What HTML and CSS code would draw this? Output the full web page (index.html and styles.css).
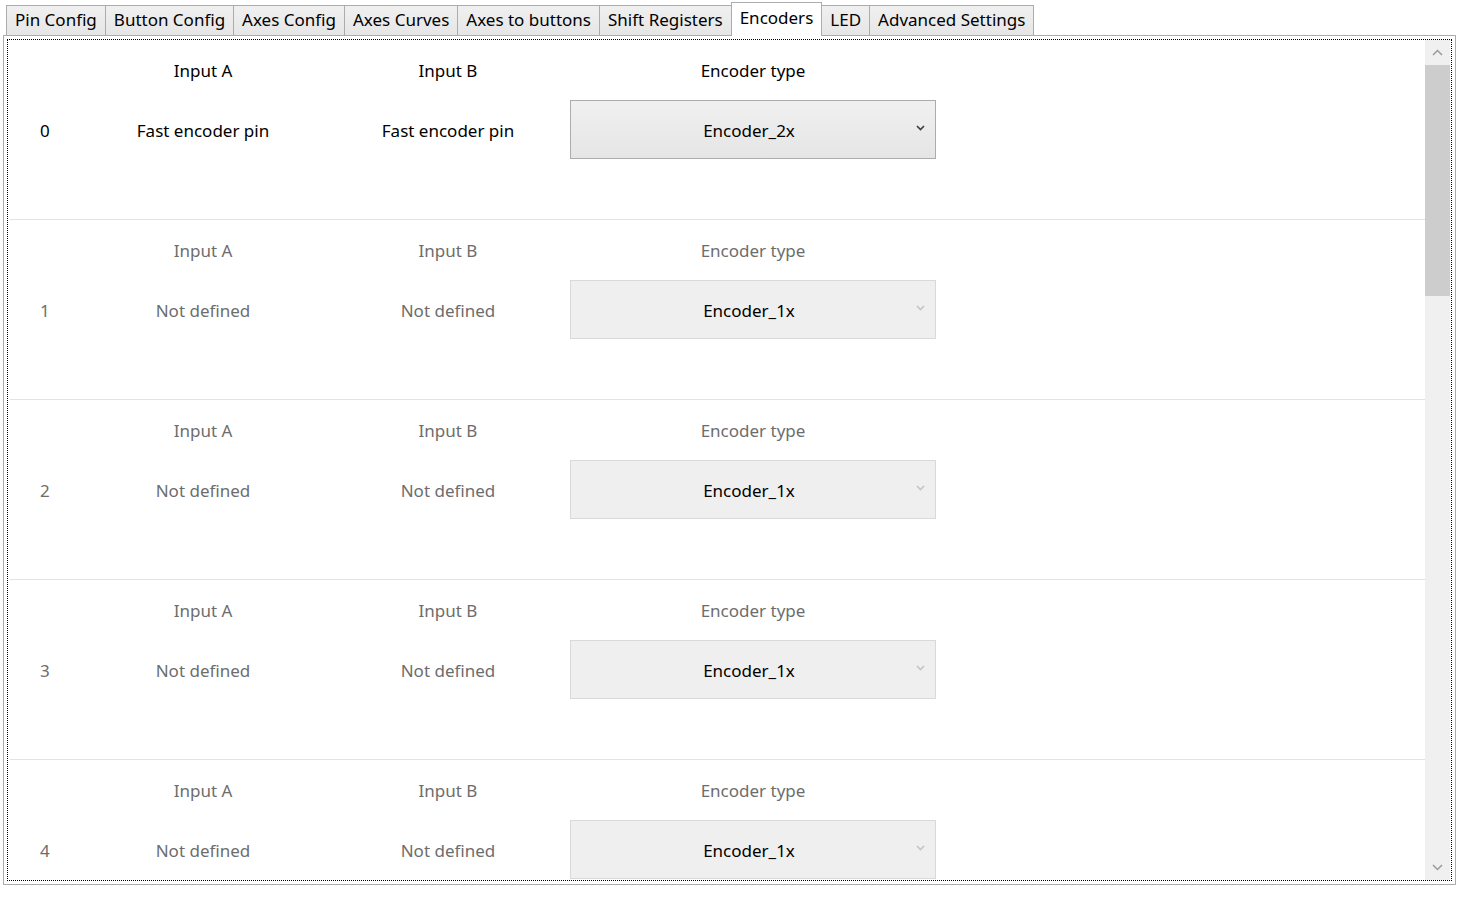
FILE: index.html
```html
<!DOCTYPE html>
<html>
<head>
<meta charset="utf-8">
<link rel="stylesheet" href="styles.css">
</head>
<body>
<div class="window">
  <div class="tabs">
    <div class="tab">Pin Config</div>
    <div class="tab">Button Config</div>
    <div class="tab">Axes Config</div>
    <div class="tab">Axes Curves</div>
    <div class="tab">Axes to buttons</div>
    <div class="tab">Shift Registers</div>
    <div class="tab selected">Encoders</div>
    <div class="tab">LED</div>
    <div class="tab">Advanced Settings</div>
  </div>
  <div class="panel">
    <div class="focus">
      <div class="list">
        <div class="row">
          <div class="hdr"></div>
          <div class="hdr">Input A</div>
          <div class="hdr">Input B</div>
          <div class="hdr">Encoder type</div>
          <div class="num">0</div>
          <div class="val">Fast encoder pin</div>
          <div class="val">Fast encoder pin</div>
          <div class="combo">
            <span class="combo-text">Encoder_2x</span>
            <svg class="chev" width="9" height="6" viewBox="0 0 9 6"><polyline points="1,1 4.5,4.5 8,1" fill="none" stroke="#3c3c3c" stroke-width="1.6"/></svg>
          </div>
        </div>
        <div class="row disabled">
          <div class="hdr"></div>
          <div class="hdr">Input A</div>
          <div class="hdr">Input B</div>
          <div class="hdr">Encoder type</div>
          <div class="num">1</div>
          <div class="val">Not defined</div>
          <div class="val">Not defined</div>
          <div class="combo">
            <span class="combo-text">Encoder_1x</span>
            <svg class="chev" width="9" height="6" viewBox="0 0 9 6"><polyline points="1,1 4.5,4.5 8,1" fill="none" stroke="#c4c4c4" stroke-width="1.6"/></svg>
          </div>
        </div>
        <div class="row disabled">
          <div class="hdr"></div>
          <div class="hdr">Input A</div>
          <div class="hdr">Input B</div>
          <div class="hdr">Encoder type</div>
          <div class="num">2</div>
          <div class="val">Not defined</div>
          <div class="val">Not defined</div>
          <div class="combo">
            <span class="combo-text">Encoder_1x</span>
            <svg class="chev" width="9" height="6" viewBox="0 0 9 6"><polyline points="1,1 4.5,4.5 8,1" fill="none" stroke="#c4c4c4" stroke-width="1.6"/></svg>
          </div>
        </div>
        <div class="row disabled">
          <div class="hdr"></div>
          <div class="hdr">Input A</div>
          <div class="hdr">Input B</div>
          <div class="hdr">Encoder type</div>
          <div class="num">3</div>
          <div class="val">Not defined</div>
          <div class="val">Not defined</div>
          <div class="combo">
            <span class="combo-text">Encoder_1x</span>
            <svg class="chev" width="9" height="6" viewBox="0 0 9 6"><polyline points="1,1 4.5,4.5 8,1" fill="none" stroke="#c4c4c4" stroke-width="1.6"/></svg>
          </div>
        </div>
        <div class="row disabled">
          <div class="hdr"></div>
          <div class="hdr">Input A</div>
          <div class="hdr">Input B</div>
          <div class="hdr">Encoder type</div>
          <div class="num">4</div>
          <div class="val">Not defined</div>
          <div class="val">Not defined</div>
          <div class="combo">
            <span class="combo-text">Encoder_1x</span>
            <svg class="chev" width="9" height="6" viewBox="0 0 9 6"><polyline points="1,1 4.5,4.5 8,1" fill="none" stroke="#c4c4c4" stroke-width="1.6"/></svg>
          </div>
        </div>
      </div>
      <div class="scrollbar">
        <div class="sb-btn">
          <svg width="11" height="7" viewBox="0 0 11 7"><polyline points="1,6 5.5,1.5 10,6" fill="none" stroke="#9a9a9a" stroke-width="1.5"/></svg>
        </div>
        <div class="sb-track">
          <div class="sb-thumb"></div>
        </div>
        <div class="sb-btn">
          <svg width="11" height="7" viewBox="0 0 11 7"><polyline points="1,1 5.5,5.5 10,1" fill="none" stroke="#9a9a9a" stroke-width="1.5"/></svg>
        </div>
      </div>
    </div>
  </div>
</div>
</body>
</html>
```

FILE: styles.css
```css
* { box-sizing: border-box; }

html, body {
  margin: 0;
  padding: 0;
  background: #ffffff;
}

body {
  font-family: "Noto Sans", "Open Sans", sans-serif;
  font-size: 17px;
  color: #000000;
}

.window {
  padding-left: 3px;
  width: 1464px;
  height: 903px;
}

.tabs {
  display: flex;
  align-items: flex-end;
  height: 35px;
  margin-left: 3px;
}

.tab {
  height: 30px;
  padding: 0 8px 3px;
  display: flex;
  align-items: center;
  justify-content: center;
  background: linear-gradient(#f0f0f0, #e6e6e6);
  border: 1px solid #acacac;
  border-bottom: none;
  margin-left: -1px;
  white-space: nowrap;
  color: #000;
}

.tab:first-child {
  margin-left: 0;
}

.tab.selected {
  position: relative;
  z-index: 2;
  height: 34px;
  margin-bottom: -1px;
  background: #ffffff;
  padding-bottom: 4px;
}

.panel {
  width: 1453px;
  height: 850px;
  border: 1px solid #acacac;
  padding: 3px;
  background: #ffffff;
}

.focus {
  width: 100%;
  height: 100%;
  border: 1px dotted #000000;
  display: flex;
  overflow: hidden;
}

.list {
  flex: 1;
  padding-left: 2px;
  overflow: hidden;
}

.row {
  height: 180px;
  border-bottom: 1px solid #e3e3e3;
  display: grid;
  grid-template-columns: 70px 246px 244px 366px;
  grid-template-rows: 60px 59px;
}

.hdr {
  display: flex;
  align-items: center;
  justify-content: center;
  padding-top: 0;
}

.num {
  display: flex;
  align-items: center;
  padding-left: 30px;
  padding-top: 1px;
}

.val {
  display: flex;
  align-items: center;
  justify-content: center;
  padding-top: 1px;
}

.combo {
  position: relative;
  display: flex;
  align-items: center;
  justify-content: center;
  border: 1px solid #acacac;
  background: linear-gradient(#f0f0f0, #e5e5e5);
  padding-right: 8px;
  padding-top: 1px;
}

.chev {
  position: absolute;
  right: 10px;
  top: 24px;
}

.disabled .hdr,
.disabled .num,
.disabled .val {
  color: #6d6d6d;
}

.disabled .combo {
  background: #efefef;
  border-color: #d9d9d9;
}

.scrollbar {
  width: 25px;
  margin-right: 1px;
  background: #f0f0f0;
  display: flex;
  flex-direction: column;
}

.sb-btn {
  height: 25px;
  display: flex;
  align-items: center;
  justify-content: center;
}

.sb-track {
  flex: 1;
}

.sb-thumb {
  height: 231px;
  background: #cdcdcd;
}
```
